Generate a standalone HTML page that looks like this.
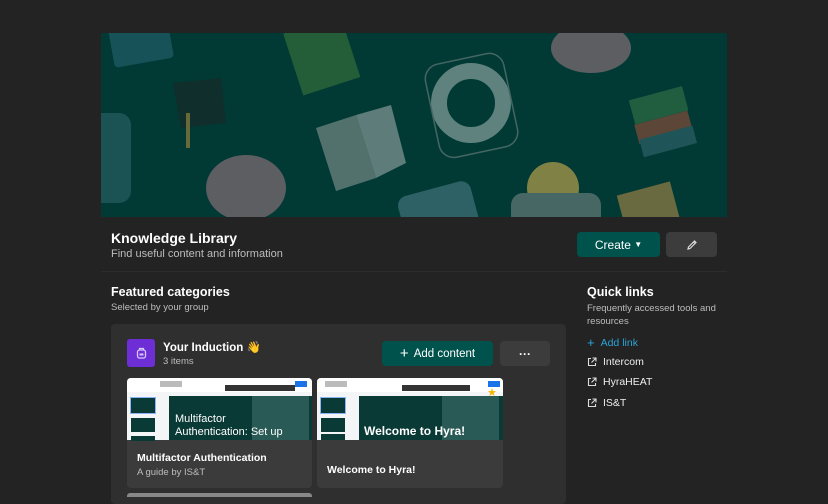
<!DOCTYPE html>
<html><head><meta charset="utf-8"><style>
*{box-sizing:border-box;margin:0;padding:0}
body{width:828px;height:497px;background:#232323;font-family:"Liberation Sans",Arial,sans-serif;color:#fff;position:relative;overflow:hidden}
.abs{position:absolute}
.banner{left:101px;top:33px;width:626px;height:184px;background:#013a34;overflow:hidden}
.t1{font-size:14px;font-weight:bold}
.sub{font-size:11px;color:#bdbdbd}
.btn{position:absolute;border-radius:4px;display:flex;align-items:center;justify-content:center;font-size:12px}
.card{position:absolute;background:#3b3b3b;border-radius:4px;overflow:hidden}
.thumb{position:absolute;left:0;top:0;width:100%;height:62px;background:#f4f5f7}
.ql{position:absolute;left:587px;font-size:10.5px;color:#eee;display:flex;align-items:center;gap:6px}
</style></head><body>
<div class="abs banner">
<svg width="626" height="184" viewBox="0 0 626 184" style="opacity:.75">
<rect x="10" y="-10" width="60" height="40" rx="4" fill="#1d5a63" transform="rotate(-10 40 10)"/>
<rect x="190" y="-10" width="60" height="65" fill="#2f6a3a" transform="rotate(-18 220 20)"/>
<path d="M72 50 L120 45 L125 90 L80 95Z" fill="#152a28"/>
<rect x="85" y="80" width="4" height="35" fill="#8a7a3a"/>
<rect x="-10" y="80" width="40" height="90" rx="12" fill="#245c5f"/>
<path d="M215 95 L255 82 L275 145 L235 158Z" fill="#6d8481"/>
<path d="M255 82 L290 72 L305 130 L275 145Z" fill="#7d9390"/>
<circle cx="370" cy="70" r="32" fill="none" stroke="#7f9a97" stroke-width="16"/>
<rect x="330" y="25" width="80" height="95" rx="15" fill="none" stroke="#5c7572" stroke-width="1.5" transform="rotate(-12 370 70)"/>
<ellipse cx="490" cy="15" rx="40" ry="25" fill="#7c6b72"/>
<ellipse cx="145" cy="155" rx="40" ry="33" fill="#7c6b72"/>
<rect x="530" y="60" width="55" height="25" fill="#2c6a45" transform="rotate(-15 557 72)"/>
<rect x="535" y="85" width="55" height="20" fill="#7a4a3a" transform="rotate(-15 560 95)"/>
<rect x="540" y="100" width="55" height="18" fill="#2a5d66" transform="rotate(-15 565 110)"/>
<circle cx="452" cy="155" r="26" fill="#a99a4a"/>
<rect x="410" y="160" width="90" height="40" rx="12" fill="#5d7674"/>
<rect x="300" y="155" width="75" height="50" rx="10" fill="#3e6f77" transform="rotate(-15 337 180)"/>
<rect x="520" y="155" width="55" height="40" fill="#8c7a44" transform="rotate(-15 547 175)"/>
</svg>
</div>
<div class="abs t1" style="left:111px;top:230px">Knowledge Library</div>
<div class="abs sub" style="left:111px;top:248px">Find useful content and information</div>
<div class="btn" style="left:577px;top:232px;width:83px;height:25px;background:#00534d">Create&nbsp;<span style="font-size:8px">▼</span></div>
<div class="btn" style="left:666px;top:232px;width:51px;height:25px;background:#3c3c3c">
<svg width="12" height="12" viewBox="0 0 12 12"><path d="M2 10 L2.5 8 L8.5 2 L10 3.5 L4 9.5Z M7.5 3 L9 4.5" fill="none" stroke="#ddd" stroke-width="1.2"/></svg></div>
<div class="abs" style="left:101px;top:271px;width:626px;height:1px;background:#2c2c2c"></div>
<div class="abs t1" style="left:111px;top:285px;font-size:12.5px">Featured categories</div>
<div class="abs sub" style="left:111px;top:302px;font-size:9.5px">Selected by your group</div>
<div class="abs" style="left:111px;top:324px;width:455px;height:180px;background:#2f2f2f;border-radius:4px"></div>
<div class="abs" style="left:127px;top:339px;width:28px;height:28px;background:#6d2ed6;border-radius:3px;display:flex;align-items:center;justify-content:center">
<svg width="11" height="12" viewBox="0 0 11 12"><rect x="1.5" y="3" width="8" height="8" rx="2" fill="none" stroke="#d8c8ff" stroke-width="1.3"/><path d="M3.5 3 V1.5 H7.5 V3" fill="none" stroke="#d8c8ff" stroke-width="1.2"/><rect x="3.5" y="6.5" width="4" height="2" fill="#d8c8ff"/></svg></div>
<div class="abs" style="left:163px;top:340px;font-size:11.5px;font-weight:bold">Your Induction <span style="color:#e8a92a">👋</span></div>
<div class="abs sub" style="left:163px;top:356px;font-size:9.5px">3 items</div>
<div class="btn" style="left:382px;top:341px;width:111px;height:25px;background:#00534d;font-size:11.5px"><span style="font-size:15px;margin-right:5px">+</span>Add content</div>
<div class="btn" style="left:500px;top:341px;width:50px;height:25px;background:#3c3c3c;font-weight:bold">···</div>

<div class="card" style="left:127px;top:378px;width:185px;height:110px">
<div class="thumb">
<div class="abs" style="left:0;top:0;width:185px;height:14px;background:#fff"></div>
<div class="abs" style="left:33px;top:3px;width:22px;height:6px;background:#bbb"></div>
<div class="abs" style="left:98px;top:7px;width:70px;height:6px;background:#333"></div>
<div class="abs" style="left:168px;top:3px;width:12px;height:6px;background:#1a73e8"></div>
<div class="abs" style="left:4px;top:20px;width:24px;height:15px;background:#0a3a36;outline:1px solid #8ab4f8"></div>
<div class="abs" style="left:4px;top:40px;width:24px;height:14px;background:#0a3a36"></div>
<div class="abs" style="left:4px;top:58px;width:24px;height:5px;background:#0a3a36"></div>
<div class="abs" style="left:42px;top:18px;width:143px;height:44px;background:#0a3a36"></div>
<div class="abs" style="left:125px;top:18px;width:57px;height:44px;background:#2a5a55"></div>
<div class="abs" style="left:48px;top:35px;font-size:11px;line-height:13px;color:#fff">Multifactor<br>Authentication: Set up</div>
</div>
<div class="abs" style="left:10px;top:74px;font-size:10.5px;font-weight:bold">Multifactor Authentication</div>
<div class="abs sub" style="left:10px;top:89px;font-size:9.5px">A guide by IS&amp;T</div>
</div>
<div class="card" style="left:317px;top:378px;width:186px;height:110px">
<div class="thumb">
<div class="abs" style="left:0;top:0;width:186px;height:14px;background:#fff"></div>
<div class="abs" style="left:8px;top:3px;width:22px;height:6px;background:#bbb"></div>
<div class="abs" style="left:85px;top:7px;width:68px;height:6px;background:#333"></div>
<div class="abs" style="left:171px;top:3px;width:12px;height:6px;background:#1a73e8"></div>
<div class="abs" style="left:170px;top:8px;color:#f5b400;font-size:11px">★</div>
<div class="abs" style="left:4px;top:20px;width:24px;height:15px;background:#0a3a36;outline:1px solid #8ab4f8"></div>
<div class="abs" style="left:4px;top:40px;width:24px;height:14px;background:#0a3a36"></div>
<div class="abs" style="left:4px;top:56px;width:24px;height:6px;background:#0a3a36"></div>
<div class="abs" style="left:42px;top:18px;width:144px;height:44px;background:#0a3a36"></div>
<div class="abs" style="left:125px;top:18px;width:57px;height:44px;background:#2a5a55"></div>
<div class="abs" style="left:47px;top:46px;font-size:12px;font-weight:bold;color:#fff">Welcome to Hyra!</div>
</div>
<div class="abs" style="left:10px;top:86px;font-size:10.5px;font-weight:bold">Welcome to Hyra!</div>
</div>
<div class="abs" style="left:127px;top:493px;width:185px;height:4px;background:#888;border-radius:3px 3px 0 0"></div>

<div class="abs t1" style="left:587px;top:285px;font-size:12.5px">Quick links</div>
<div class="abs sub" style="left:587px;top:302px;font-size:9.5px;line-height:13px;width:130px">Frequently accessed tools and resources</div>
<div class="ql" style="top:335px;color:#2aa4d8"><span style="font-size:13px">+</span>Add link</div>
<div class="ql" style="top:356px"><svg width="10" height="10" viewBox="0 0 10 10"><path d="M4 1.5H1.5V8.5H8.5V6 M5.5 1H9V4.5 M9 1L4.5 5.5" fill="none" stroke="#ddd" stroke-width="1.1"/></svg>Intercom</div>
<div class="ql" style="top:376px"><svg width="10" height="10" viewBox="0 0 10 10"><path d="M4 1.5H1.5V8.5H8.5V6 M5.5 1H9V4.5 M9 1L4.5 5.5" fill="none" stroke="#ddd" stroke-width="1.1"/></svg>HyraHEAT</div>
<div class="ql" style="top:397px"><svg width="10" height="10" viewBox="0 0 10 10"><path d="M4 1.5H1.5V8.5H8.5V6 M5.5 1H9V4.5 M9 1L4.5 5.5" fill="none" stroke="#ddd" stroke-width="1.1"/></svg>IS&amp;T</div>
</body></html>
